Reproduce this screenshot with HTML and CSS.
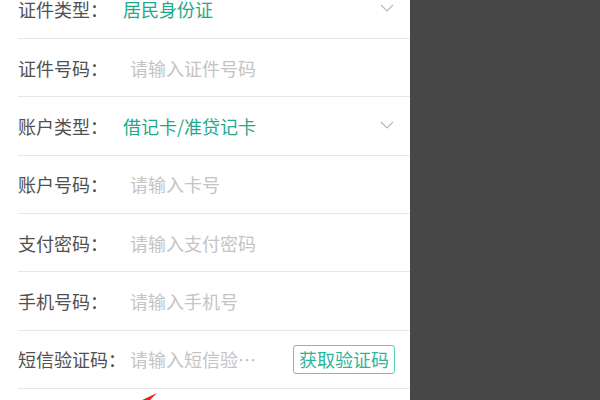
FILE: index.html
```html
<!DOCTYPE html>
<html lang="zh-CN">
<head>
<meta charset="utf-8">
<link rel="stylesheet" href="styles.css">
</head>
<body>
<div class="screen">
  <div class="panel">
    <ul class="form">
      <li class="row">
        <span class="label">证件类型：</span>
        <span class="value">居民身份证</span>
        <svg class="chev" width="14" height="8" viewBox="0 0 14 8"><path d="M1 1 L7 7 L13 1" fill="none" stroke="#b8b8b8" stroke-width="1.2"/></svg>
      </li>
      <li class="row">
        <span class="label">证件号码：</span>
        <span class="ph">请输入证件号码</span>
      </li>
      <li class="row">
        <span class="label">账户类型：</span>
        <span class="value">借记卡/准贷记卡</span>
        <svg class="chev" width="14" height="8" viewBox="0 0 14 8"><path d="M1 1 L7 7 L13 1" fill="none" stroke="#b8b8b8" stroke-width="1.2"/></svg>
      </li>
      <li class="row">
        <span class="label">账户号码：</span>
        <span class="ph">请输入卡号</span>
      </li>
      <li class="row">
        <span class="label">支付密码：</span>
        <span class="ph">请输入支付密码</span>
      </li>
      <li class="row">
        <span class="label">手机号码：</span>
        <span class="ph">请输入手机号</span>
      </li>
      <li class="row">
        <span class="label">短信验证码：</span>
        <span class="ph ph-near">请输入短信验…</span>
        <span class="btn">获取验证码</span>
      </li>
      <li class="row row-last"></li>
    </ul>
    <svg class="arrow" width="30" height="12" viewBox="0 0 30 12"><polygon points="27,3 8,12 18,12" fill="#e8231e"/></svg>
  </div>
  <div class="shade"></div>
</div>
</body>
</html>
```

FILE: styles.css
```css
html, body {
  margin: 0;
  padding: 0;
  width: 600px;
  height: 400px;
  overflow: hidden;
  background: #474747;
}
.screen {
  display: flex;
  width: 600px;
  height: 400px;
  font-family: "Noto Sans CJK SC", "Noto Sans", sans-serif;
}
.panel {
  position: relative;
  width: 410px;
  height: 400px;
  background: #ffffff;
  overflow: hidden;
}
.shade {
  flex: 1;
  background: #474747;
}
.form {
  list-style: none;
  margin: -19.4px 0 0 0;
  padding: 0 0 0 18px;
}
.row {
  box-sizing: border-box;
  height: 58.35px;
  border-bottom: 1px solid #e6e6e6;
  display: flex;
  align-items: center;
  font-size: 18px;
  line-height: 1;
  padding-right: 16px;
  white-space: nowrap;
}
.label {
  min-width: 105px;
  color: #505050;
  flex: none;
}
.value {
  color: #1fa98a;
  flex: 1;
}
.ph {
  color: #c4c4c4;
  flex: 1;
  padding-left: 7px;
}
.ph-near {
  padding-left: 4px;
}
.chev {
  flex: none;
  margin-top: -2px;
}
.btn {
  flex: none;
  box-sizing: border-box;
  height: 29px;
  padding: 0 5px;
  display: flex;
  align-items: center;
  border: 1.5px solid #5ccdb6;
  border-radius: 3px;
  color: #2db59a;
  font-size: 18px;
  margin-right: -1px;
}
.row-last {
  border-bottom: none;
}
.arrow {
  position: absolute;
  left: 130px;
  top: 390px;
}
```
